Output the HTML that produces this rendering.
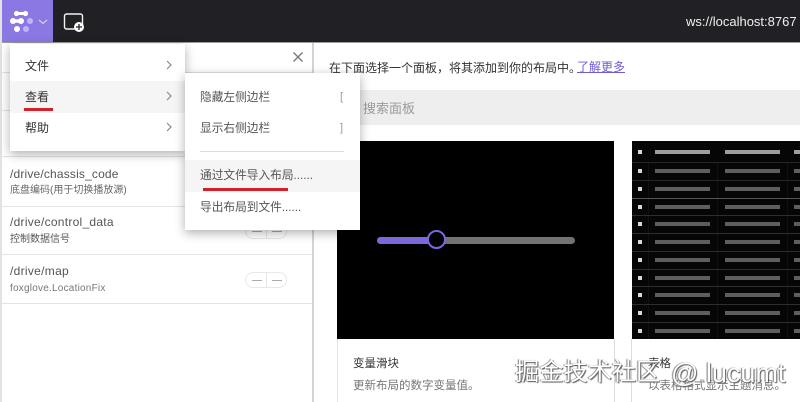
<!DOCTYPE html>
<html lang="zh">
<head>
<meta charset="utf-8">
<style>
html,body{margin:0;padding:0;background:#fff}
#p{position:relative;width:800px;height:402px;overflow:hidden;background:#fff;font-family:"Liberation Sans","Noto Sans CJK SC",sans-serif;color:#333}
#p div,#p span.a,#p svg,#p a{position:absolute}
.t{white-space:nowrap;line-height:1}
.hl{background:#d0d0d0;height:1px}
.menu{background:#fff;box-shadow:0 3px 10px rgba(0,0,0,.32)}
.chev{fill:none;stroke:#8a8a8a;stroke-width:1.2}
.pill{border:1px solid #e8e8e8;border-radius:8px;width:40px;height:14px;background:#fff}
.pill i{position:absolute;top:7px;width:10px;height:1px;background:#aaa}
.pill b{position:absolute;left:20px;top:0;width:1px;height:14px;background:#e8e8e8}
</style>
</head>
<body>
<div id="p">
  <!-- top bar -->
  <div style="left:0;top:0;width:800px;height:42px;background:#212125"></div>
  <div style="left:0;top:42px;width:800px;height:1px;background:#9a9a9c"></div>
  <div style="left:2px;top:0;width:51px;height:42px;background:#8b78e2"></div>
  <div style="left:0;top:0;width:2px;height:402px;background:#e2e2e2"></div>
  <svg style="left:8px;top:8px" width="42" height="26" viewBox="0 0 42 26">
    <circle cx="8.500" cy="5.500" r="2.600" fill="#fff"/>
    <circle cx="17.500" cy="5.500" r="2.600" fill="#fff"/>
    <rect x="8" y="4" width="10" height="3" fill="#fff"/>
    <circle cx="5" cy="13" r="3" fill="#fff"/>
    <circle cx="13" cy="13" r="3" fill="#fff"/>
    <rect x="5" y="11.300" width="8" height="3.400" fill="#fff"/>
    <circle cx="22" cy="13" r="3" fill="#c0b5f0"/>
    <circle cx="9" cy="21" r="3" fill="#fff"/>
    <circle cx="18" cy="21" r="3" fill="#c0b5f0"/>
    <path d="M31 12l4 3.500 4-3.500" fill="none" stroke="#d6cef6" stroke-width="1.200"/>
  </svg>
  <svg style="left:62px;top:11px" width="24" height="22" viewBox="0 0 24 22">
    <rect x="2.500" y="3" width="18" height="15" rx="2" fill="none" stroke="#f2f2f2" stroke-width="1.400"/>
    <circle cx="17" cy="16" r="5" fill="#fff"/>
    <path d="M17 13v6M14 16h6" stroke="#222" stroke-width="1.300"/>
  </svg>
  <div class="t" style="left:686px;top:15px;font-size:13px;color:#f0f0f0">ws://localhost:8767</div>

  <!-- left sidebar -->
  <div style="left:312px;top:43px;width:2px;height:359px;background:#d4d4d4"></div>
  <svg style="left:292px;top:51px" width="12" height="12" viewBox="0 0 12 12"><path d="M1.500 1.500l9 9M10.500 1.500l-9 9" stroke="#777" stroke-width="1.300"/></svg>
  <div class="hl" style="left:2px;top:72px;width:310px;background:#e3e3e3"></div>
  <div class="hl" style="left:2px;top:110px;width:310px;background:#e3e3e3"></div>
  <div class="hl" style="left:2px;top:156px;width:310px;background:#e3e3e3"></div>
  <div class="hl" style="left:2px;top:206px;width:310px;background:#e3e3e3"></div>
  <div class="hl" style="left:2px;top:254px;width:310px;background:#e3e3e3"></div>
  <div class="hl" style="left:2px;top:303px;width:310px;background:#e3e3e3"></div>

  <div class="t" style="left:10px;top:168px;font-size:12px;letter-spacing:.17px;color:#555">/drive/chassis_code</div>
  <div class="t" style="left:10px;top:186px;font-size:10px;color:#666">底盘编码(用于切换播放源)</div>
  <div class="t" style="left:10px;top:216px;font-size:12px;letter-spacing:.27px;color:#555">/drive/control_data</div>
  <div class="t" style="left:10px;top:235px;font-size:10px;color:#555">控制数据信号</div>
  <div class="t" style="left:10px;top:265px;font-size:12px;letter-spacing:.3px;color:#555">/drive/map</div>
  <div class="t" style="left:10px;top:284px;font-size:10px;letter-spacing:.22px;color:#777">foxglove.LocationFix</div>

  <div class="pill" style="left:245px;top:223px"><i style="left:6px"></i><b></b><i style="left:26px"></i></div>
  <div class="pill" style="left:245px;top:272px"><i style="left:6px"></i><b></b><i style="left:26px"></i></div>

  <!-- main panel -->
  <div class="t" style="left:329px;top:62px;font-size:12px;color:#333">在下面选择一个面板，将其添加到你的布局中。</div>
  <a class="t" style="left:577px;top:61px;font-size:12px;color:#6f5bd6;text-decoration:underline">了解更多</a>
  <div style="left:314px;top:90px;width:486px;height:35px;background:#eeeeee"></div>
  <div class="t" style="left:363px;top:102px;font-size:13px;color:#9a9a9a">搜索面板</div>

  <!-- card 1 -->
  <div style="left:337px;top:141px;width:277px;height:198px;background:#000"></div>
  <div style="left:337px;top:339px;width:1px;height:63px;background:#e6e6e6"></div>
  <div style="left:614px;top:339px;width:1px;height:63px;background:#dcdcdc"></div>
  <div style="left:377px;top:237px;width:198px;height:7px;border-radius:4px;background:#727272"></div>
  <div style="left:377px;top:237px;width:58px;height:7px;border-radius:4px 0 0 4px;background:#7b68dc"></div>
  <div style="left:427px;top:230px;width:15px;height:15px;border:2px solid #7b68dc;border-radius:50%;background:#000"></div>
  <div class="t" style="left:353px;top:359px;font-size:11.500px;color:#333">变量滑块</div>
  <div class="t" style="left:353px;top:381px;font-size:11.500px;color:#777">更新布局的数字变量值。</div>

  <!-- card 2 -->
  <div style="left:631px;top:339px;width:1px;height:63px;background:#dcdcdc"></div>
  <div style="left:632px;top:141px;width:168px;height:198px;background:#060606"></div>
  <svg style="left:632px;top:141px" width="168" height="198" viewBox="0 0 168 198">
    <g fill="#101010">
      <rect x="16" y="21" width="1" height="177"/>
      <rect x="85" y="21" width="1" height="177"/>
      <rect x="155" y="21" width="1" height="177"/>
    </g>
    <g>
      <rect x="0" y="21" width="168" height="1" fill="#262626"/>
      <rect x="0" y="39" width="168" height="1" fill="#262626"/>
      <rect x="0" y="57" width="168" height="1" fill="#555"/>
      <rect x="0" y="74" width="168" height="1" fill="#2e2e2e"/>
      <rect x="0" y="92" width="168" height="1" fill="#2e2e2e"/>
      <rect x="0" y="110" width="168" height="1" fill="#2e2e2e"/>
      <rect x="0" y="128" width="168" height="1" fill="#2e2e2e"/>
      <rect x="0" y="145" width="168" height="1" fill="#2e2e2e"/>
      <rect x="0" y="163" width="168" height="1" fill="#2e2e2e"/>
      <rect x="0" y="181" width="168" height="1" fill="#2e2e2e"/>
    </g>
    <g fill="#d8d8d8">
      <rect x="6" y="9" width="4" height="4"/><rect x="6" y="28" width="4" height="4"/><rect x="6" y="46" width="4" height="4"/><rect x="6" y="64" width="4" height="4"/><rect x="6" y="81" width="4" height="4"/><rect x="6" y="99" width="4" height="4"/><rect x="6" y="117" width="4" height="4"/><rect x="6" y="135" width="4" height="4"/><rect x="6" y="152" width="4" height="4"/><rect x="6" y="170" width="4" height="4"/><rect x="6" y="188" width="4" height="4"/>
    </g>
    <g fill="#9e9e9e"><rect x="23" y="9" width="55" height="4"/><rect x="93" y="9" width="55" height="4"/><rect x="162" y="9" width="6" height="4"/></g>
    <g fill="#5e5e5e">
      <rect x="23" y="28" width="55" height="4"/><rect x="93" y="28" width="55" height="4"/><rect x="162" y="28" width="6" height="4"/>
      <rect x="23" y="46" width="55" height="4"/><rect x="93" y="46" width="55" height="4"/><rect x="162" y="46" width="6" height="4"/>
      <rect x="23" y="64" width="55" height="4"/><rect x="93" y="64" width="55" height="4"/><rect x="162" y="64" width="6" height="4"/>
      <rect x="23" y="81" width="55" height="4"/><rect x="93" y="81" width="55" height="4"/><rect x="162" y="81" width="6" height="4"/>
      <rect x="23" y="99" width="55" height="4"/><rect x="93" y="99" width="55" height="4"/><rect x="162" y="99" width="6" height="4"/>
      <rect x="23" y="117" width="55" height="4"/><rect x="93" y="117" width="55" height="4"/><rect x="162" y="117" width="6" height="4"/>
      <rect x="23" y="135" width="55" height="4"/><rect x="93" y="135" width="55" height="4"/><rect x="162" y="135" width="6" height="4"/>
      <rect x="23" y="152" width="55" height="4"/><rect x="93" y="152" width="55" height="4"/><rect x="162" y="152" width="6" height="4"/>
      <rect x="23" y="170" width="55" height="4"/><rect x="93" y="170" width="55" height="4"/><rect x="162" y="170" width="6" height="4"/>
      <rect x="23" y="188" width="55" height="4"/><rect x="93" y="188" width="55" height="4"/><rect x="162" y="188" width="6" height="4"/>
    </g>
  </svg>
  <div class="t" style="left:648px;top:359px;font-size:11.500px;color:#333">表格</div>
  <div class="t" style="left:648px;top:381px;font-size:11.500px;color:#777">以表格格式显示主题消息。</div>

  <!-- left menu -->
  <div class="menu" style="left:10px;top:44px;width:175px;height:107px"></div>
  <div style="left:10px;top:81px;width:175px;height:32px;background:#f5f5f5"></div>
  <div class="t" style="left:25px;top:60px;font-size:12px;color:#333">文件</div>
  <div class="t" style="left:25px;top:91px;font-size:12px;color:#333">查看</div>
  <div class="t" style="left:25px;top:122px;font-size:12px;color:#333">帮助</div>
  <div style="left:24px;top:108px;width:29px;height:3px;background:#d3212b"></div>
  <svg style="left:165px;top:59px" width="8" height="12" viewBox="0 0 8 12"><path class="chev" d="M2 2l4 4-4 4"/></svg>
  <svg style="left:165px;top:90px" width="8" height="12" viewBox="0 0 8 12"><path class="chev" d="M2 2l4 4-4 4"/></svg>
  <svg style="left:165px;top:121px" width="8" height="12" viewBox="0 0 8 12"><path class="chev" d="M2 2l4 4-4 4"/></svg>

  <!-- submenu -->
  <div class="menu" style="left:185px;top:73px;width:175px;height:157px"></div>
  <div style="left:185px;top:160px;width:175px;height:32px;background:#f5f5f5"></div>
  <div style="left:200px;top:151px;width:144px;height:1px;background:#dcdcdc"></div>
  <div class="t" style="left:200px;top:92px;font-size:11.700px;color:#555">隐藏左侧边栏</div>
  <div class="t" style="left:200px;top:123px;font-size:11.700px;color:#555">显示右侧边栏</div>
  <div class="t" style="left:200px;top:170px;font-size:11.700px;color:#555">通过文件导入布局......</div>
  <div class="t" style="left:200px;top:202px;font-size:11.700px;color:#555">导出布局到文件......</div>
  <div class="t" style="left:340px;top:92px;font-size:11px;color:#999">[</div>
  <div class="t" style="left:340px;top:123px;font-size:11px;color:#999">]</div>
  <div style="left:203px;top:188px;width:85px;height:3px;background:#d3212b"></div>

  <!-- watermark -->
  <div class="t" style="left:515px;top:361px;font-size:24.200px;color:#fff;text-shadow:1px 1px 1px #555,-1px 0 1px #777">掘金技术社区</div>
  <div class="t" style="left:671px;top:360px;font-size:27px;color:#fff;text-shadow:1px 1px 1px #555,-1px 0 1px #777">@ lucumt</div>
</div>
</body>
</html>
